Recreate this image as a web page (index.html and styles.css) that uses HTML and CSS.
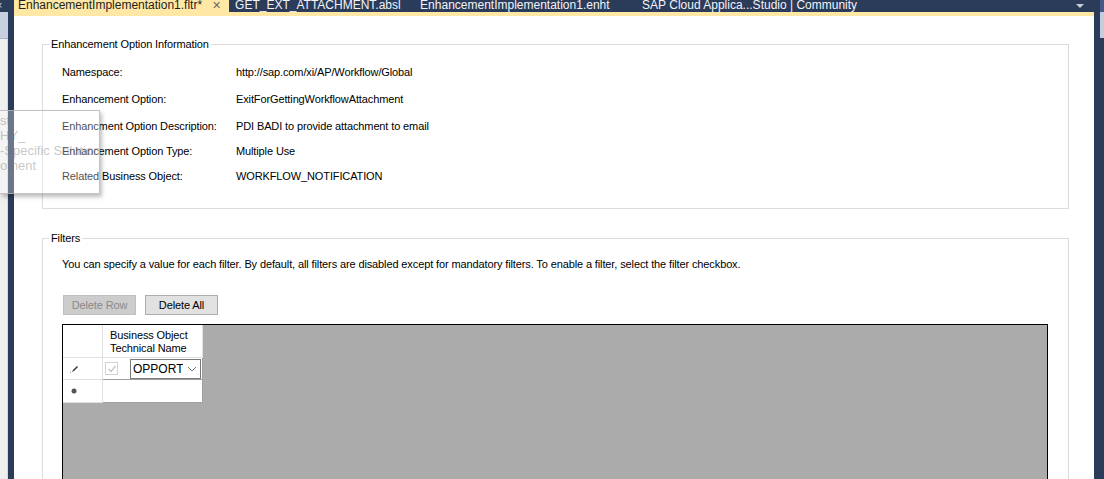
FILE: index.html
```html
<!DOCTYPE html>
<html lang="en">
  <head>
    <meta charset="UTF-8" />
    <title>EnhancementImplementation1.fltr</title>
    <link rel="stylesheet" href="styles.css">
  </head>
  <body>
    <div class="window">
      <div class="rail-left">
        <div class="rl-top">&times;</div>
        <div class="rl-tab"></div>
        <div class="rl-panel"></div>
      </div>

      <div class="doc">
        <div class="tabs">
          <div class="tab active">
            <span>EnhancementImplementation1.fltr*</span>
            <span class="close">&#x2715;</span>
          </div>
          <div class="tab t2">GET_EXT_ATTACHMENT.absl</div>
          <div class="tab t3">EnhancementImplementation1.enht</div>
          <div class="tab t4">SAP Cloud Applica...Studio | Community</div>
          <div class="tab-menu"></div>
        </div>
        <div class="tab-line"></div>

        <div class="page">
          <fieldset class="group info">
            <legend>Enhancement Option Information</legend>
            <div class="props">
              <div class="lbl">Namespace:</div>
              <div class="val">http://sap.com/xi/AP/Workflow/Global</div>
              <div class="lbl">Enhancement Option:</div>
              <div class="val">ExitForGettingWorkflowAttachment</div>
              <div class="lbl">Enhancment Option Description:</div>
              <div class="val">PDI BADI to provide attachment to email</div>
              <div class="lbl">Enhancement Option Type:</div>
              <div class="val">Multiple Use</div>
              <div class="lbl">Related Business Object:</div>
              <div class="val">WORKFLOW_NOTIFICATION</div>
            </div>
          </fieldset>

          <fieldset class="group filters">
            <legend>Filters</legend>
            <p class="hint">You can specify a value for each filter. By default, all filters are disabled except for mandatory filters. To enable a filter, select the filter checkbox.</p>
            <div class="actions">
              <button class="btn" disabled>Delete Row</button>
              <button class="btn">Delete All</button>
            </div>
            <div class="datagrid">
              <div class="cells">
                <div class="hc corner"></div>
                <div class="hc colhead">Business Object<br>Technical Name</div>
                <div class="rh">
                  <svg width="9" height="8" viewBox="0 0 9 8"><path d="M2 7 L3 5 L7 1 L8 2 L4 6 Z" fill="#333"/><rect x="0" y="7" width="1" height="1" fill="#888"/></svg>
                </div>
                <div class="dc">
                  <span class="chk">
                    <svg width="10" height="10" viewBox="0 0 10 10"><path d="M1.5 5 L4 7.5 L8.5 2" fill="none" stroke="#c4c4c4" stroke-width="1.2"/></svg>
                  </span>
                  <span class="combo">
                    <span class="combo-text">OPPORTUNITY</span>
                    <svg width="10" height="6" viewBox="0 0 10 6"><path d="M1 1 L5 5 L9 1" fill="none" stroke="#777" stroke-width="1"/></svg>
                  </span>
                </div>
                <div class="rh new">
                  <svg width="6" height="6" viewBox="0 0 6 6"><circle cx="3" cy="3" r="2.5" fill="#555"/></svg>
                </div>
                <div class="dc"></div>
              </div>
            </div>
          </fieldset>
        </div>
      </div>

      <div class="rail-right">
        <div class="rr-top"></div>
        <div class="rr-tab"></div>
      </div>

      <div class="ghost">
        <div>st</div>
        <div>HY_</div>
        <div>-Specific Solution</div>
        <div>oment</div>
      </div>
    </div>
  </body>
</html>
```

FILE: styles.css
```css
html, body {
  margin: 0;
  height: 100%;
}
body {
  background-color: #2b3b5a;
  font-family: "Liberation Sans", Arial, sans-serif;
  font-size: 11px;
  letter-spacing: -0.12px;
  color: #000;
  overflow: hidden;
}
.window {
  position: relative;
  display: flex;
  height: 479px;
}

/* side rails */
.rail-left {
  width: 8px;
  display: flex;
  flex-direction: column;
}
.rl-top {
  height: 12px;
  color: #c9d0dc;
  font-size: 11px;
  line-height: 10px;
  text-indent: -4px;
  overflow: hidden;
}
.rl-tab {
  height: 26px;
  background-color: #c7d0de;
  border-bottom: 1px solid #a9b3c4;
}
.rl-panel {
  flex: 1;
  background-color: #efefef;
  border-right: 1px solid #d8d8d8;
}
.rail-right {
  width: 4px;
  margin-left: 6px;
  display: flex;
  flex-direction: column;
}
.rr-top {
  height: 12px;
  background-color: #45598a;
}
.rr-tab {
  height: 26px;
  background-color: #c3cddd;
}

/* document */
.doc {
  width: 1080px;
  margin-left: 6px;
  display: flex;
  flex-direction: column;
}
.tabs {
  height: 12px;
  display: flex;
  overflow: hidden;
  font-size: 12px;
  letter-spacing: 0;
  line-height: 11px;
  color: #f2f4f8;
}
.tab {
  white-space: nowrap;
}
.tab.active {
  background-color: #ffe8a6;
  color: #1e1e1e;
  padding: 0 8px 0 4px;
  display: flex;
  gap: 10px;
}
.close {
  color: #6b6b6b;
  font-size: 11px;
}
.t2 {
  padding-left: 6px;
  width: 185px;
}
.t3 {
  width: 222px;
}
.t4 {
  flex: 1;
}
.tab-menu {
  width: 0;
  height: 0;
  margin: 4px 10px 0 0;
  border-left: 4px solid transparent;
  border-right: 4px solid transparent;
  border-top: 4px solid #c9d0dc;
}
.tab-line {
  height: 4px;
  background-color: #ffe8a6;
}
.page {
  flex: 1;
  background-color: #fff;
  padding: 22px 25px 0 28px;
  overflow: hidden;
}

/* group boxes */
.group {
  margin: 0;
  padding: 0 0 0 19px;
  border: 1px solid #dcdcdc;
}
.group legend {
  margin-left: -13px;
  padding: 0 2px;
  line-height: 13px;
}
.info {
  height: 171px;
  box-sizing: border-box;
}
.props {
  display: grid;
  grid-template-columns: 174px auto;
  grid-template-rows: 26px 27px 27px 24px 25px;
  align-items: center;
  padding-top: 8px;
}
.filters {
  margin-top: 23px;
  height: 260px;
}
.hint {
  margin: 13px 0 0;
}
.actions {
  display: flex;
  gap: 9px;
  margin: 25px 0 9px 1px;
}
.btn {
  width: 73px;
  height: 20px;
  padding: 0;
  font-family: "Liberation Sans", Arial, sans-serif;
  font-size: 11px;
  letter-spacing: -0.12px;
  color: #000;
  background-color: #e1e1e1;
  border: 1px solid #adadad;
}
.btn:disabled {
  color: #8a8a8a;
  background-color: #cccccc;
  border-color: #bfbfbf;
}

/* data grid */
.datagrid {
  margin-right: 20px;
  height: 200px;
  background-color: #ababab;
  border: 1px solid #000;
}
.cells {
  display: grid;
  grid-template-columns: 40px 100px;
  grid-template-rows: 33px 22px 23px;
}
.hc {
  background-color: #fff;
  border-right: 1px solid #e0e0e0;
  border-bottom: 1px solid #e0e0e0;
}
.colhead {
  padding: 4px 0 0 7px;
  line-height: 13px;
}
.rh {
  background-color: #fff;
  border-right: 1px solid #e0e0e0;
  border-bottom: 1px solid #e0e0e0;
  display: flex;
  align-items: center;
  padding-left: 7px;
}
.rh.new {
  padding-left: 8px;
}
.dc {
  background-color: #fff;
  border-right: 1px solid #a0a0a0;
  border-bottom: 1px solid #a0a0a0;
  display: flex;
  align-items: center;
}
.chk {
  width: 11px;
  height: 11px;
  margin-left: 2px;
  border: 1px solid #d2d2d2;
  display: flex;
  align-items: center;
  justify-content: center;
}
.combo {
  margin-left: 12px;
  width: 71px;
  height: 20px;
  box-sizing: border-box;
  border: 1px solid #7a7a7a;
  display: flex;
  align-items: center;
  gap: 4px;
  font-size: 12px;
  letter-spacing: 0;
}
.combo-text {
  width: 50px;
  padding-left: 2px;
  overflow: hidden;
  white-space: nowrap;
}

/* ghost of a dragged window */
.ghost {
  position: absolute;
  left: 0;
  top: 110px;
  width: 99px;
  height: 80px;
  background-color: rgba(255, 255, 255, 0.3);
  border: 1px solid rgba(180, 180, 180, 0.8);
  border-left: none;
  box-shadow: 2px 3px 4px rgba(0, 0, 0, 0.25);
  color: rgba(110, 110, 110, 0.4);
  font-size: 13px;
  letter-spacing: 0;
  line-height: 15px;
  padding-top: 2px;
  white-space: nowrap;
  overflow: hidden;
}
```
